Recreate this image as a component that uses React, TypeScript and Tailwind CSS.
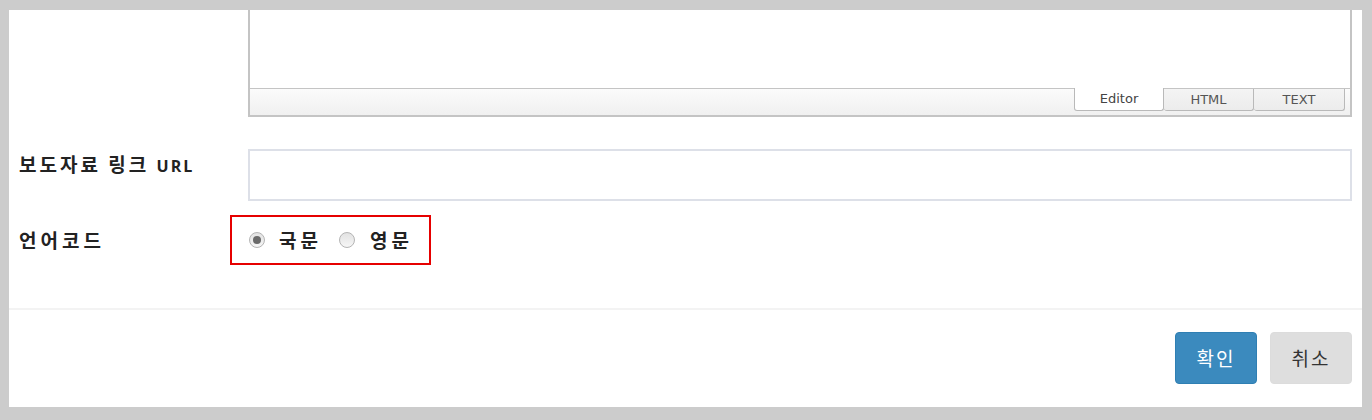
import React from "react";

function Radio({ checked }: { checked?: boolean }) {
  return (
    <span className="relative inline-flex h-[16px] w-[16px] items-center justify-center rounded-full border border-[#b4b4b4] bg-gradient-to-b from-[#e2e2e2] to-[#f6f6f6]">
      {checked && <span className="h-[8px] w-[8px] rounded-full bg-[#6a6a6a]" />}
    </span>
  );
}

export default function App() {
  const font = { fontFamily: '"Noto Sans CJK KR", "Noto Sans", sans-serif' };
  const tabFont = { fontFamily: '"DejaVu Sans", sans-serif' };
  return (
    <div className="w-[1372px] h-[420px] bg-[#cccccc] pt-[10px] pl-[9px] pr-[10px] pb-[13px]" style={font}>
      <div className="flex h-full flex-col bg-white">
        {/* editor */}
        <div className="flex pl-[239px] pr-[10px]">
          <div className="flex w-full flex-col border-x-2 border-b-2 border-[#c4c4c4]">
            <div className="h-[79px] border-b border-[#c4c4c4] bg-white" />
            <div className="flex h-[26px] justify-end bg-gradient-to-b from-[#fbfbfb] to-[#f0f0f0] pr-[5px]">
              <div className="mt-[-1px] flex h-[23px] w-[90px] items-center justify-center rounded-b-[3px] border-x border-b border-[#b9b9b9] bg-white text-[13px] text-[#444]" style={tabFont}>
                Editor
              </div>
              <div className="flex h-[22px] w-[90px] items-center justify-center rounded-b-[3px] border-r border-b border-[#b9b9b9] bg-gradient-to-b from-[#f4f4f4] to-[#ececec] text-[13px] text-[#555]" style={tabFont}>
                HTML
              </div>
              <div className="flex h-[22px] w-[91px] items-center justify-center rounded-b-[3px] border-r border-b border-[#b9b9b9] bg-gradient-to-b from-[#f4f4f4] to-[#ececec] text-[13px] text-[#555]" style={tabFont}>
                TEXT
              </div>
            </div>
          </div>
        </div>

        {/* URL row */}
        <div className="mt-[32px] flex pl-[10px] pr-[10px]">
          <div className="w-[229px] pt-[2px] text-[19px] leading-[26px] font-semibold tracking-[3px] text-[#222]">
            보도자료 링크{" "}
            <span className="text-[16px] font-bold tracking-[2px]" style={{ fontFamily: '"Open Sans", sans-serif' }}>
              URL
            </span>
          </div>
          <div className="h-[52px] flex-1 border-2 border-[#dde0e8] bg-white" />
        </div>

        {/* language row */}
        <div className="mt-[14px] flex items-center pl-[10px] pr-[10px]">
          <div className="w-[211px] text-[19px] leading-[26px] font-semibold tracking-[4px] text-[#222]">언어코드</div>
          <div className="flex h-[50px] w-[201px] items-center border-2 border-[#e60000] pl-[17px]">
            <label className="flex items-center">
              <Radio checked />
              <span className="ml-[14px] text-[19px] font-semibold tracking-[4px] text-[#222]">국문</span>
            </label>
            <label className="ml-[17px] flex items-center">
              <Radio />
              <span className="ml-[15px] text-[19px] font-semibold tracking-[4px] text-[#222]">영문</span>
            </label>
          </div>
        </div>

        <div className="mt-[43px] h-[2px] bg-[#f3f3f3]" />

        {/* buttons */}
        <div className="mt-[22px] flex justify-end gap-[13px] pr-[10px]">
          <button className="h-[52px] w-[82px] rounded-[4px] border border-[#2f7fb3] bg-[#3b8abe] text-[19px] tracking-[2px] text-white">
            확인
          </button>
          <button className="h-[52px] w-[82px] rounded-[4px] border border-[#dcdcdc] bg-[#dedede] text-[19px] tracking-[2px] text-[#333]">
            취소
          </button>
        </div>
      </div>
    </div>
  );
}
